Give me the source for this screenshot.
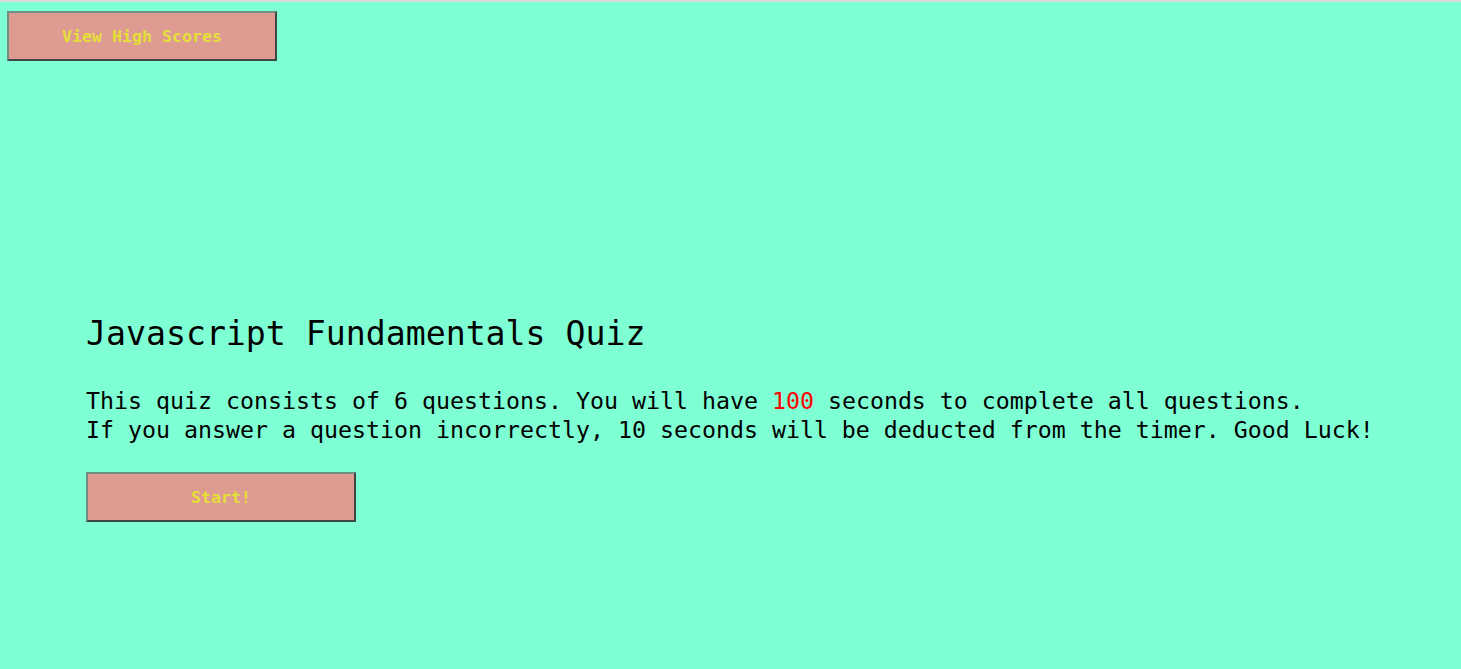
export default function App() {
  const btn =
    'w-[270px] h-[50px] bg-[#dd9b91] text-[#e6df3a] font-bold text-[16.6px] pt-[3px] border-2 border-t-[#6f8f86] border-l-[#6f8f86] border-b-[#3f4745] border-r-[#3f4745] flex items-center justify-center'

  return (
    <div className="min-h-screen bg-[#7fffd4] font-['DejaVu_Sans_Mono',monospace] text-black">
      <div className="h-[2px] bg-[#d9d9d9]" />
      <button className={`${btn} ml-[7px] mt-[9px]`}>View High Scores</button>

      <main className="pl-[86px] pt-[253px]">
        <h1 className="text-[33.2px] leading-[40px] font-normal">Javascript Fundamentals Quiz</h1>
        <p className="mt-[32px] text-[23.26px] leading-[29px]">
          This quiz consists of 6 questions. You will have <span className="text-[#ff0000]">100</span> seconds to complete all questions.
          <br />
          If you answer a question incorrectly, 10 seconds will be deducted from the timer. Good Luck!
        </p>
        <button className={`${btn} mt-[28px]`}>Start!</button>
      </main>
    </div>
  )
}
